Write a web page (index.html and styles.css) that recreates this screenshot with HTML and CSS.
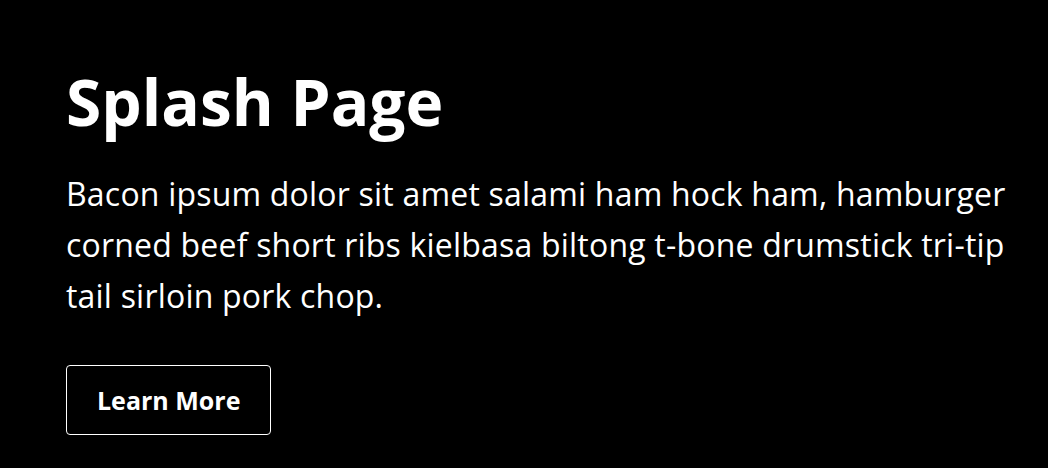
FILE: index.html
```html
<!DOCTYPE html>
<html lang="en">
<head>
<meta charset="utf-8">
<title>Splash Page</title>
<link rel="stylesheet" href="styles.css">
</head>
<body>
<main class="hero">
  <h1 class="hero-title">Splash Page</h1>
  <p class="hero-text">Bacon ipsum dolor sit amet salami ham hock ham, hamburger corned beef short ribs kielbasa biltong t-bone drumstick tri-tip tail sirloin pork chop.</p>
  <a class="hero-button" href="#">Learn More</a>
</main>
</body>
</html>
```
FILE: styles.css
```css
html, body {
  margin: 0;
  background: #000;
  color: #fff;
  font-family: "Open Sans", "Noto Sans", sans-serif;
}
.hero {
  padding: 62px 20px 32px 66px;
  display: flex;
  flex-direction: column;
  align-items: flex-start;
}
.hero-title {
  margin: 0;
  font-size: 64px;
  font-weight: 700;
  line-height: 80px;
}
.hero-text {
  margin: 26px 0 44px;
  font-size: 32px;
  line-height: 51px;
  letter-spacing: 0.2px;
  max-width: 962px;
}
.hero-button {
  display: inline-block;
  color: #fff;
  text-decoration: none;
  border: 1px solid #fff;
  border-radius: 4px;
  padding: 0 30px;
  height: 68px;
  line-height: 68px;
  font-size: 25px;
  font-weight: 700;
}
```
